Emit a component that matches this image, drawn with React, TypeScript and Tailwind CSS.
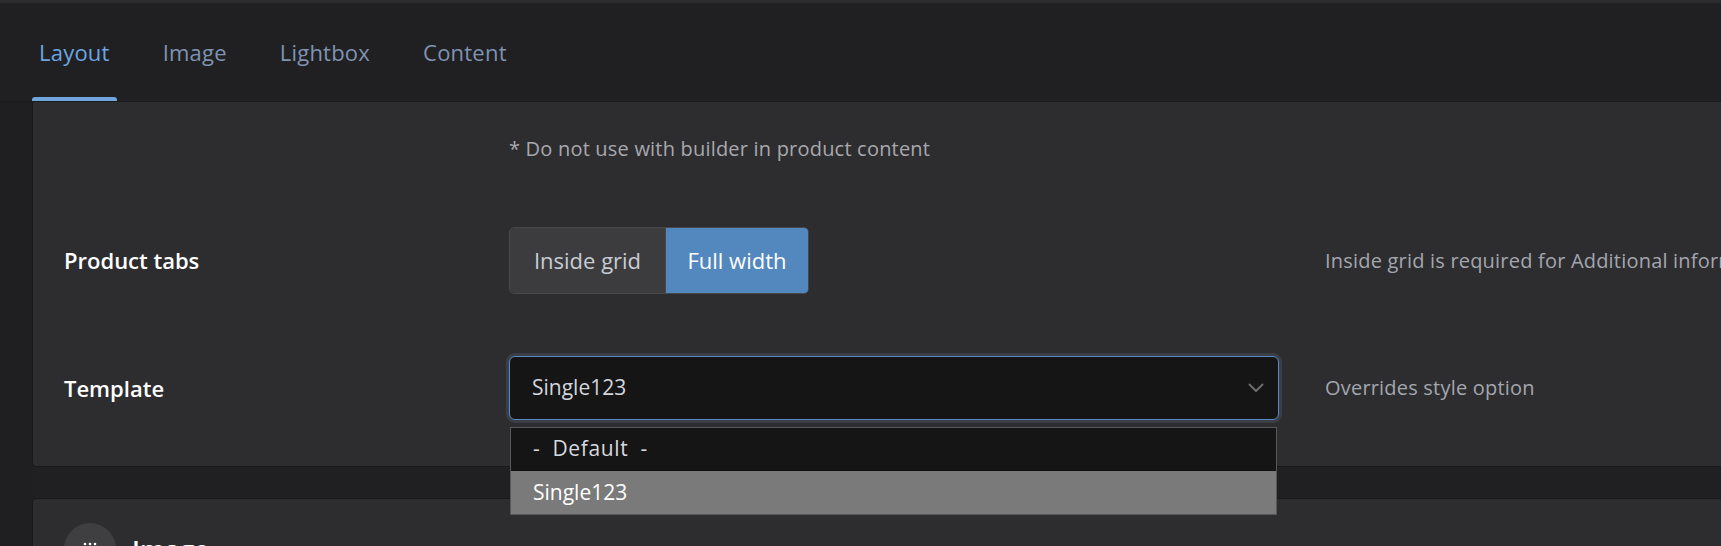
import React from "react";

const tabs = [
  { label: "Layout", active: true },
  { label: "Image", active: false },
  { label: "Lightbox", active: false },
  { label: "Content", active: false },
];

function Chevron() {
  return (
    <svg width="16" height="10" viewBox="0 0 16 10" fill="none">
      <path d="M1.5 1.5 L8 8 L14.5 1.5" stroke="#6b6b6e" strokeWidth="2" strokeLinecap="round" strokeLinejoin="round" />
    </svg>
  );
}

function Grip() {
  const cols = [0, 5, 10];
  const rows = [0, 5, 10];
  return (
    <svg width="14" height="14" viewBox="-2 -2 14 14">
      {cols.map((x) =>
        rows.map((y) => <circle key={`${x}-${y}`} cx={x} cy={y} r="1.3" fill="#ffffff" />)
      )}
    </svg>
  );
}

export default function App() {
  return (
    <div
      className="w-[1721px] h-[546px] overflow-hidden bg-[#202022] flex flex-col"
      style={{ fontFamily: '"Open Sans", "Noto Sans", sans-serif' }}
    >
      <div className="h-[3px] bg-[#2c2c2e] shrink-0" />
      {/* header tabs */}
      <div className="h-[99px] shrink-0 flex pl-[32px] gap-[39px] border-b border-[#1b1b1c]">
        {tabs.map((t) => (
          <div key={t.label} className="flex flex-col">
            <div
              className={`flex-1 flex items-center justify-center px-[7px] pt-[5px] text-[22px] tracking-[0.01em] ${
                t.active ? "text-[#6ca6e2]" : "text-[#7f93b2]"
              }`}
            >
              {t.label}
            </div>
            <div className={`h-[4px] rounded-t-[3px] ${t.active ? "bg-[#6fa6dd]" : "bg-transparent"}`} />
          </div>
        ))}
      </div>

      <div className="flex-1 flex">
        <div className="w-[32px] shrink-0 bg-[#1f1f21]" />
        <div className="flex-1 flex flex-col gap-[31px] mr-[-12px]">
          {/* Layout card */}
          <div className="bg-[#2d2d30] border border-t-0 border-[#19191a] rounded-b-[4px] h-[365px] pl-[31px] flex flex-col">
            <div className="pt-[32px] pl-[445px] h-[125px]">
              <div className="text-[20px] tracking-[0.01em] leading-[30px] text-[#a8a8ad]">
                * Do not use with builder in product content
              </div>
            </div>

            <div className="flex items-center h-[67px]">
              <div className="w-[445px] text-[22px] font-semibold text-white">Product tabs</div>
              <div className="w-[770px] flex">
                <div className="flex h-[67px] rounded-[5px] overflow-hidden border border-[#48484b]">
                  <div className="w-[156px] bg-[#3c3c3f] flex items-center justify-center text-[22px] text-[#c9ccd3] border-r border-[#48484b]">
                    Inside grid
                  </div>
                  <div className="w-[142px] bg-[#5388be] flex items-center justify-center text-[22px] text-white">
                    Full width
                  </div>
                </div>
              </div>
              <div className="ml-[46px] text-[20px] tracking-[0.01em] text-[#a3a6ad] whitespace-nowrap">
                Inside grid is required for Additional information
              </div>
            </div>

            <div className="h-[62px]" />

            <div className="flex items-center h-[64px]">
              <div className="w-[445px] text-[22px] font-semibold text-white">Template</div>
              <div className="w-[770px] relative">
                <div className="h-[64px] rounded-[6px] bg-[#151515] border border-[#5a89c2] ring-[3px] ring-[#3a3e46] flex items-center justify-between pl-[22px] pr-[14px]">
                  <span className="text-[21px] text-[#d3d6dd]">Single123</span>
                  <Chevron />
                </div>
                <div className="absolute left-[1px] right-[2px] top-[71px] z-10 bg-[#151515] border border-[#58585b] flex flex-col">
                  <div className="h-[43px] flex items-center pl-[22px] text-[21px] tracking-[0.03em] [word-spacing:6px] text-[#d8d8de] border-b border-[#111]">
                    - Default -
                  </div>
                  <div className="h-[43px] flex items-center pl-[22px] text-[21px] text-white bg-[#7a7a7a]">
                    Single123
                  </div>
                </div>
              </div>
              <div className="ml-[46px] text-[20px] tracking-[0.01em] text-[#a3a6ad] whitespace-nowrap">
                Overrides style option
              </div>
            </div>
          </div>

          {/* Image card */}
          <div className="bg-[#2d2d30] border border-[#19191a] rounded-t-[4px] flex-1 pl-[31px] pt-[24px]">
            <div className="flex items-center gap-[16px]">
              <div className="w-[52px] h-[52px] rounded-full bg-[#3f3f42] flex items-center justify-center">
                <Grip />
              </div>
              <div className="text-[26px] font-semibold text-white">Image</div>
            </div>
          </div>
        </div>
      </div>
    </div>
  );
}
